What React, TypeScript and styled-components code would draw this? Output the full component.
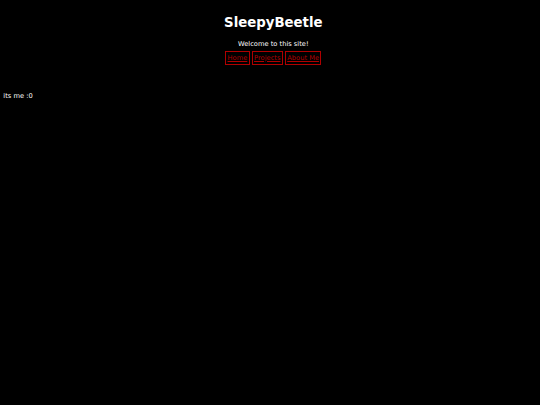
import React from 'react';
import styled, { createGlobalStyle } from 'styled-components';

const GlobalStyle = createGlobalStyle`
  html, body {
    margin: 0;
    padding: 0;
    background: #000;
    overflow: hidden;
  }
  body {
    font-family: "DejaVu Sans", Verdana, sans-serif;
    color: #fff;
  }
`;

const Page = styled.div`
  min-height: 405px;
  width: 540px;
  padding: 0 0 0 3.3px;
  background: #000;
`;

const Header = styled.header`
  display: flex;
  flex-direction: column;
  align-items: center;
  padding-top: 15px;
`;

const Title = styled.h1`
  margin: 0;
  font-size: 13.3px;
  font-weight: bold;
  line-height: 16px;
`;

const Welcome = styled.p`
  margin: 9px 0 0;
  font-size: 6.7px;
  line-height: 8px;
`;

const Nav = styled.nav`
  display: flex;
  gap: 2px;
  margin-top: 3px;
`;

const NavLink = styled.a`
  display: block;
  border: 1px solid #b00000;
  color: #b00000;
  font-size: 6.7px;
  line-height: 8.5px;
  padding: 1.5px 1.4px;
  text-decoration: underline;
  cursor: pointer;
`;

const Body = styled.p`
  margin: 27px 0 0;
  font-size: 6.7px;
  line-height: 8px;
`;

export default function App() {
  return (
    <Page>
      <GlobalStyle />
      <Header>
        <Title>SleepyBeetle</Title>
        <Welcome>Welcome to this site!</Welcome>
        <Nav>
          <NavLink>Home</NavLink>
          <NavLink>Projects</NavLink>
          <NavLink>About Me</NavLink>
        </Nav>
      </Header>
      <Body>its me :0</Body>
    </Page>
  );
}
